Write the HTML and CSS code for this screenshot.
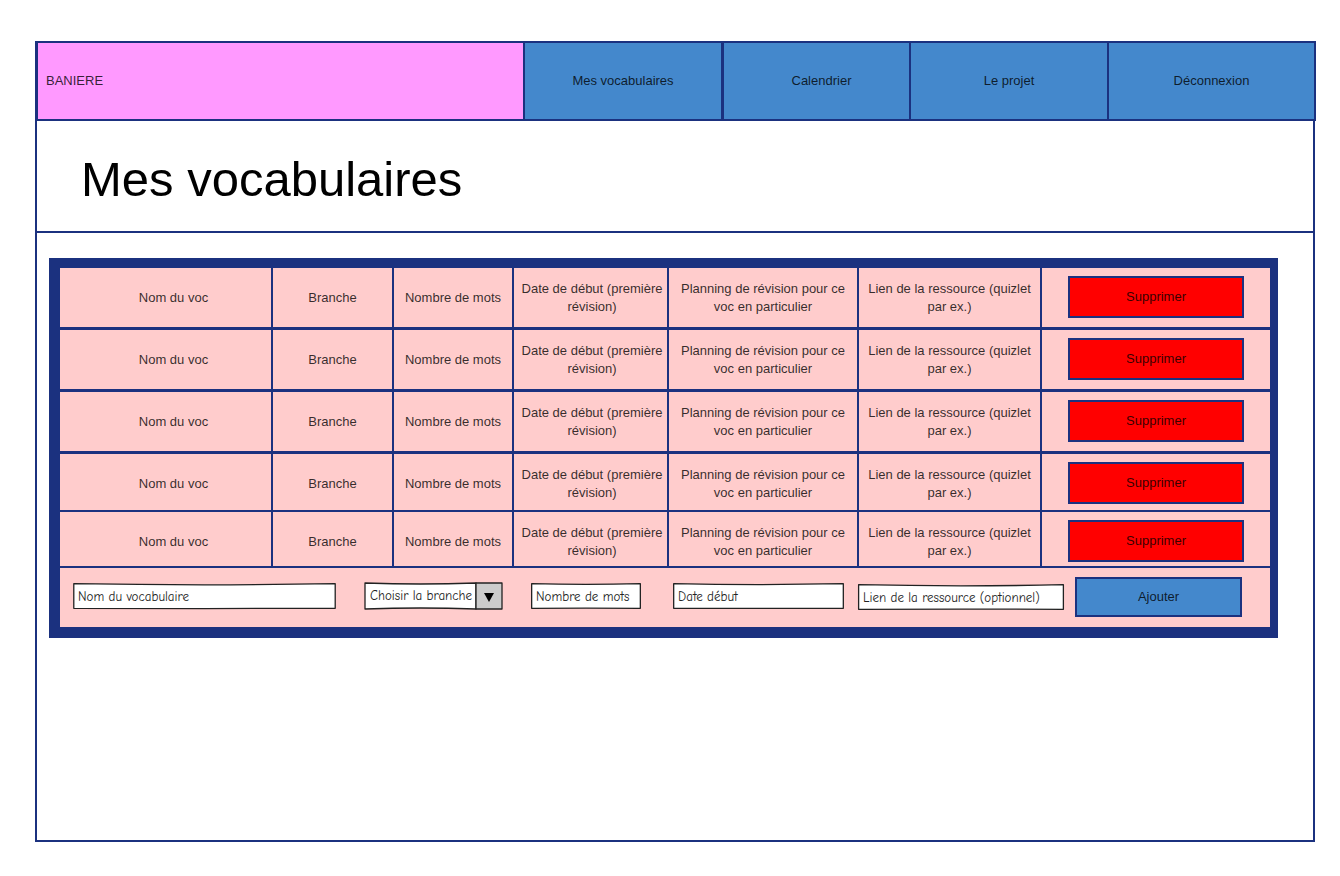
FILE: index.html
```html
<!DOCTYPE html>
<html lang="fr">
<head>
<meta charset="utf-8">
<title>Mes vocabulaires</title>
<link rel="stylesheet" href="styles.css">
</head>
<body>
<div class="page">
  <header class="header">
    <div class="banner">BANIERE</div>
    <nav class="nav">
      <a class="nav-link nav-vocab" href="#vocabulaires">Mes vocabulaires</a>
      <a class="nav-link nav-calendar" href="#calendrier">Calendrier</a>
      <a class="nav-link nav-project" href="#projet">Le projet</a>
      <a class="nav-link nav-logout" href="#deconnexion">Déconnexion</a>
    </nav>
  </header>
  <h1 class="title">Mes vocabulaires</h1>
  <main class="board">
    <table class="vocab-table">
      <colgroup>
        <col class="col-name"><col class="col-branch"><col class="col-words"><col class="col-date"><col class="col-plan"><col class="col-link"><col class="col-action">
      </colgroup>
      <tbody>
        <tr class="row">
          <td class="name">Nom du voc</td><td>Branche</td><td>Nombre de mots</td><td class="date">Date de début (première révision)</td><td>Planning de révision pour ce voc en particulier</td><td>Lien de la ressource (quizlet par ex.)</td>
          <td class="action"><button class="btn btn-delete" type="button">Supprimer</button></td>
        </tr>
        <tr class="row">
          <td class="name">Nom du voc</td><td>Branche</td><td>Nombre de mots</td><td class="date">Date de début (première révision)</td><td>Planning de révision pour ce voc en particulier</td><td>Lien de la ressource (quizlet par ex.)</td>
          <td class="action"><button class="btn btn-delete" type="button">Supprimer</button></td>
        </tr>
        <tr class="row">
          <td class="name">Nom du voc</td><td>Branche</td><td>Nombre de mots</td><td class="date">Date de début (première révision)</td><td>Planning de révision pour ce voc en particulier</td><td>Lien de la ressource (quizlet par ex.)</td>
          <td class="action"><button class="btn btn-delete" type="button">Supprimer</button></td>
        </tr>
        <tr class="row row-short">
          <td class="name">Nom du voc</td><td>Branche</td><td>Nombre de mots</td><td class="date">Date de début (première révision)</td><td>Planning de révision pour ce voc en particulier</td><td>Lien de la ressource (quizlet par ex.)</td>
          <td class="action"><button class="btn btn-delete" type="button">Supprimer</button></td>
        </tr>
        <tr class="row row-short row-last">
          <td class="name">Nom du voc</td><td>Branche</td><td>Nombre de mots</td><td class="date">Date de début (première révision)</td><td>Planning de révision pour ce voc en particulier</td><td>Lien de la ressource (quizlet par ex.)</td>
          <td class="action"><button class="btn btn-delete" type="button">Supprimer</button></td>
        </tr>
      </tbody>
    </table>
    <form class="add-form">
      <div class="field field-name">
        <svg class="sketch" viewBox="0 0 100 26" preserveAspectRatio="none" aria-hidden="true"><path d="M.3 .7Q50 3 99.7 .7V25.3Q50 25.8 .3 25.3Z"/></svg>
        <input class="input" type="text" aria-label="Nom du vocabulaire" placeholder="Nom du vocabulaire">
      </div>
      <div class="field field-branch">
        <svg class="sketch" viewBox="0 0 139 28" preserveAspectRatio="none" aria-hidden="true"><path d="M1 1Q56 3 112 1V27Q56 25 1 27Z"/><path class="arrow-box" d="M112 1H138V27H112Z"/><path class="arrow" d="M120 11H130L125 20Z"/></svg>
        <select class="select" aria-label="Choisir la branche"><option>Choisir la branche</option></select>
      </div>
      <div class="field field-words">
        <svg class="sketch" viewBox="0 0 100 26" preserveAspectRatio="none" aria-hidden="true"><path d="M.6 .7Q50 2 99.4 .7V25.3Q50 25 .6 25.3Z"/></svg>
        <input class="input" type="text" aria-label="Nombre de mots" placeholder="Nombre de mots">
      </div>
      <div class="field field-date">
        <svg class="sketch" viewBox="0 0 100 26" preserveAspectRatio="none" aria-hidden="true"><path d="M.4 .7Q50 2.4 99.6 .7V25.3H.4Z"/></svg>
        <input class="input" type="text" aria-label="Date début" placeholder="Date début">
      </div>
      <div class="field field-link">
        <svg class="sketch" viewBox="0 0 100 26" preserveAspectRatio="none" aria-hidden="true"><path d="M.3 .7Q50 3 99.7 .7V25.3Q50 24.8 .3 25.3Z"/></svg>
        <input class="input" type="text" aria-label="Lien de la ressource (optionnel)" placeholder="Lien de la ressource (optionnel)">
      </div>
      <button class="btn btn-add" type="submit">Ajouter</button>
    </form>
  </main>
</div>
</body>
</html>
```
FILE: styles.css
```css
:root {
  --navy: #1b317f;
  --blue: #4488cc;
  --pink: #ff99ff;
  --rose: #ffcccc;
  --ink: rgba(0, 0, 0, 0.8);
}

* {
  box-sizing: border-box;
}

body {
  margin: 0;
  padding: 41px 25px 34px 35px;
  background: #fff;
  color: var(--ink);
  font: 13px/18px "Liberation Sans", Arial, sans-serif;
}

.page {
  min-height: calc(100vh - 75px);
  border: 2px solid var(--navy);
  border-top: 0;
}

.header {
  display: grid;
  grid-template-columns: 490fr 791fr;
  min-height: 80px;
  margin: 0 -3px 0 -2px;
  border: 0 solid var(--navy);
  border-width: 2px 0;
}

.banner {
  display: flex;
  align-items: center;
  padding-left: 8px;
  border: 0 solid var(--navy);
  border-width: 0 2px 0 3px;
  background: var(--pink);
}

.nav {
  display: grid;
  grid-template-columns: 199fr 187fr 198fr 207fr;
}

.nav-link {
  display: flex;
  align-items: center;
  justify-content: center;
  border-right: 2px solid var(--navy);
  background: var(--blue);
  color: inherit;
  text-decoration: none;
}

.nav-vocab {
  border-right-width: 3px;
}

.nav-calendar {
  padding-left: 10px;
}

.title {
  margin: 0;
  padding: 30px 44px 24px;
  border-bottom: 2px solid var(--navy);
  color: #000;
  font-size: 49px;
  font-weight: 400;
  line-height: 56px;
}

.board {
  margin: 25px 35px 25px 12px;
  border: 0 solid var(--navy);
  border-width: 10px 8px 11px 11px;
  background: var(--rose);
}

.vocab-table {
  width: 100%;
  table-layout: fixed;
  border-spacing: 0;
}

.col-name { width: 213px; }
.col-branch { width: 121px; }
.col-words { width: 120px; }
.col-date { width: 155px; }
.col-plan { width: 190px; }
.col-link { width: 183px; }
.col-action { width: 228px; }

.row td {
  height: 62px;
  padding: 0 8px;
  border: 0 solid var(--navy);
  border-width: 0 2px 3px 0;
  text-align: center;
  vertical-align: middle;
}

.row-short td {
  height: 58px;
  padding-top: 4px;
  border-bottom-width: 2px;
}

.row-last td {
  height: 56px;
  padding-top: 6px;
}

.row .name {
  padding-left: 24px;
}

.row .date {
  padding-right: 3px;
  padding-left: 6px;
}

.row .action {
  padding: 8px 26px 0;
  border-right: 0;
  vertical-align: top;
}

.btn {
  display: block;
  padding: 0;
  border: 2px solid var(--navy);
  border-radius: 0;
  color: var(--ink);
  font: inherit;
}

.btn-delete {
  width: 100%;
  height: 42px;
  background: #f00;
}

.btn-add {
  flex: 167 1 167px;
  height: 40px;
  margin: 2px 0 0 11px;
  background: var(--blue);
}

.add-form {
  display: flex;
  align-items: center;
  min-height: 59px;
  padding: 0 28px 3px 13px;
}

.field {
  display: grid;
  grid-template-rows: 100%;
  height: 26px;
}

.field > * {
  grid-area: 1 / 1;
  width: 100%;
  height: 100%;
  min-width: 0;
}

.field-name { flex: 263 1 263px; }
.field-branch { flex: 139 1 139px; height: 28px; margin-left: 28px; }
.field-words { flex: 110 1 110px; margin-left: 28px; }
.field-date { flex: 171 1 171px; margin-left: 32px; }
.field-link { flex: 206 1 206px; margin: 2px 0 0 14px; }

.sketch {
  display: block;
  overflow: visible;
}

.sketch path {
  fill: #fff;
  stroke: #222;
  stroke-width: 1.3;
  stroke-linejoin: round;
  vector-effect: non-scaling-stroke;
}

.sketch .arrow-box {
  fill: #ccc;
}

.sketch .arrow {
  fill: #000;
  stroke: none;
}

.input,
.select {
  position: relative;
  padding: 0 5px;
  border: 0;
  background: transparent;
  color: #222;
  font: 13px/18px "Comic Neue", "Comic Sans MS", "Noto Sans", sans-serif;
}

.input::placeholder {
  color: #222;
  opacity: 1;
}

.select {
  padding: 0 28px 0 6px;
  appearance: none;
}
```
